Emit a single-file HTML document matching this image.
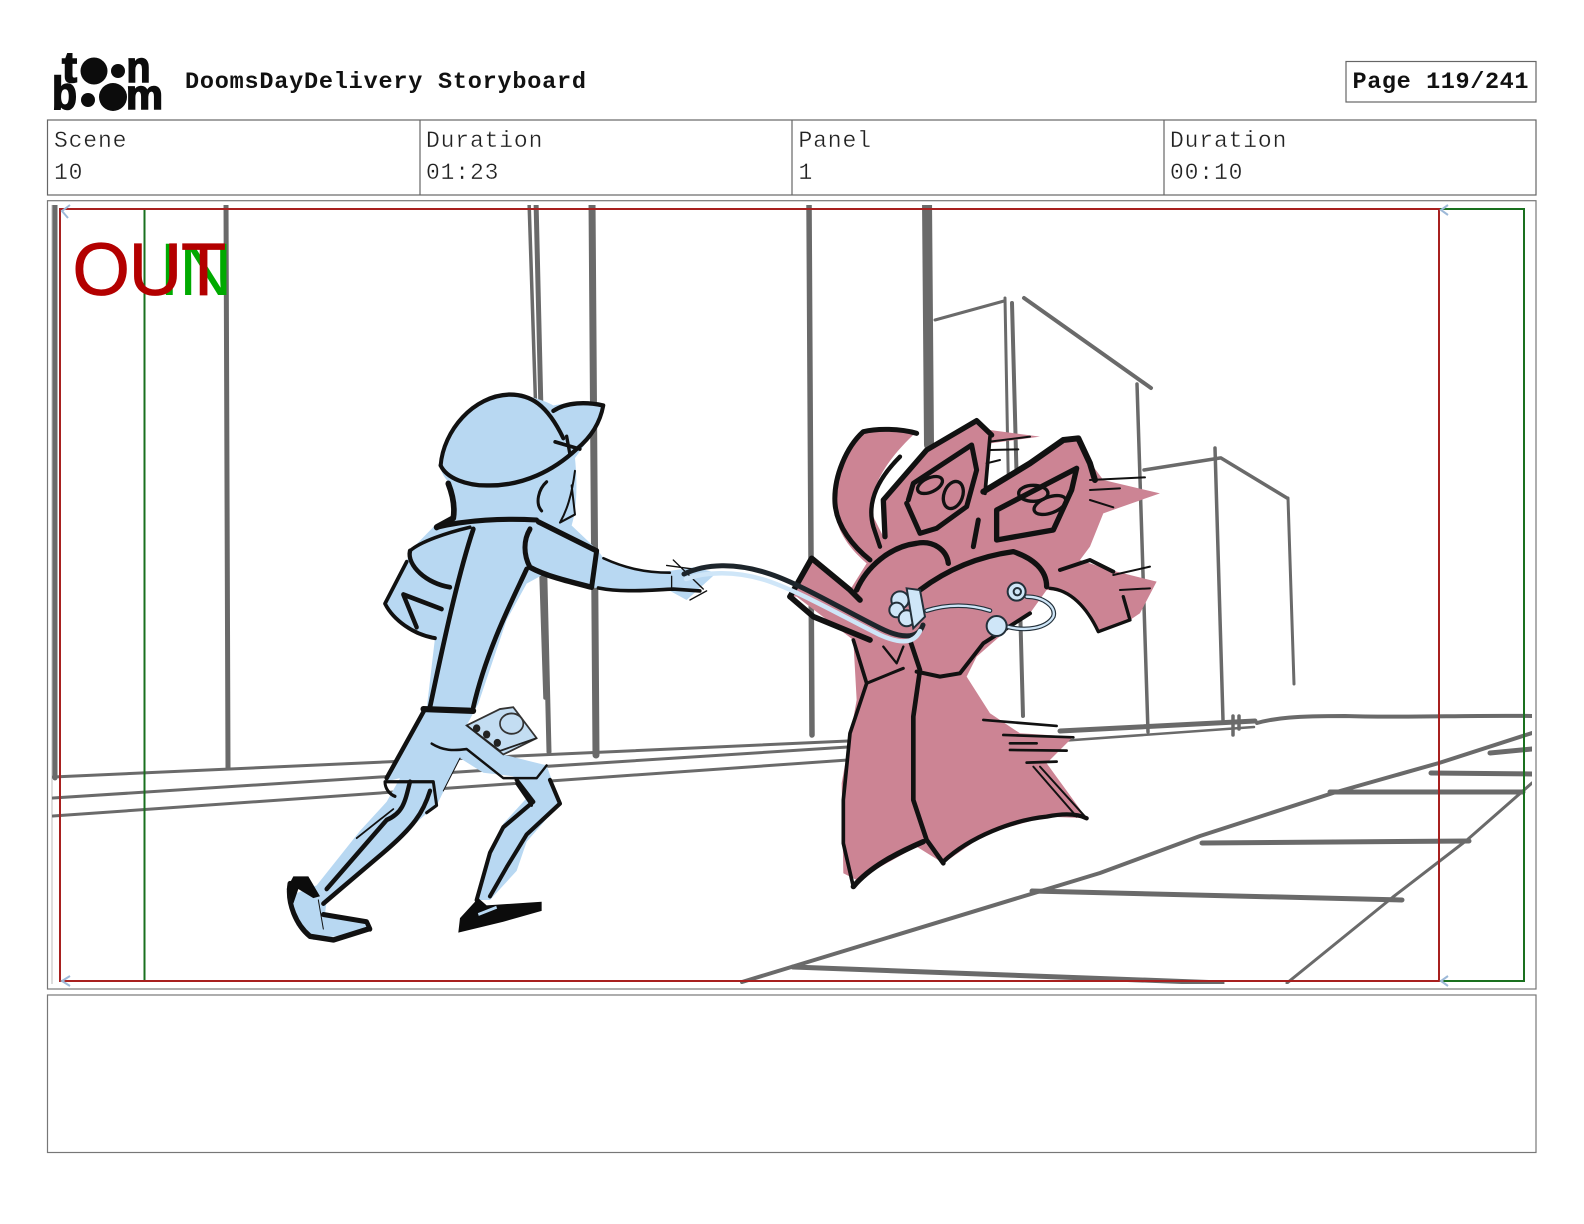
<!DOCTYPE html>
<html><head><meta charset="utf-8"><title>DoomsDayDelivery Storyboard</title>
<style>html,body{margin:0;padding:0;background:#fff}svg{display:block}
.m{font-family:"Liberation Mono",monospace;font-size:23px;fill:#222;stroke:#fff;stroke-width:.35px}
.b{font-family:"Liberation Mono",monospace;font-size:23.5px;font-weight:bold;fill:#111}
.k{fill:none;stroke:#111;stroke-linecap:round;stroke-linejoin:round}
.g{fill:none;stroke:#6a6a6a;stroke-linecap:round;stroke-linejoin:round}
</style></head><body>
<svg xmlns="http://www.w3.org/2000/svg" width="1584" height="1224" viewBox="0 0 1584 1224">
<defs><clipPath id="im"><rect x="52" y="205" width="1480" height="779"/></clipPath></defs>
<rect width="1584" height="1224" fill="#fff"/>
<!-- logo -->
<g fill="#0c0c0c" stroke="#0c0c0c" stroke-width="1.600" font-family="Liberation Sans,sans-serif" font-weight="bold">
<text x="62" y="82" font-size="44" textLength="15" lengthAdjust="spacingAndGlyphs">t</text>
<text x="126.500" y="82" font-size="44" textLength="24" lengthAdjust="spacingAndGlyphs">n</text>
<text x="52" y="109" font-size="46" textLength="25" lengthAdjust="spacingAndGlyphs">b</text>
<text x="126" y="109" font-size="42" textLength="37" lengthAdjust="spacingAndGlyphs">m</text>
</g>
<g fill="#0c0c0c"><circle cx="94" cy="71" r="13.500"/><circle cx="118" cy="71" r="7"/><circle cx="88" cy="100" r="7"/><circle cx="113" cy="97" r="14"/></g>
<text class="b" x="185" y="88" textLength="401">DoomsDayDelivery Storyboard</text>
<rect x="1346" y="61.5" width="190" height="40.5" fill="#fff" stroke="#666" stroke-width="1.2"/>
<text class="b" x="1352.5" y="88" textLength="176">Page 119/241</text>
<!-- info table -->
<rect x="47.5" y="120" width="1488.5" height="75" fill="#fff" stroke="#666" stroke-width="1.2"/>
<path d="M420 120V195M792 120V195M1164 120V195" stroke="#666" stroke-width="1.2"/>
<g letter-spacing=".85">
<text class="m" x="54" y="147">Scene</text><text class="m" x="54" y="179">10</text>
<text class="m" x="426" y="147">Duration</text><text class="m" x="426" y="179">01:23</text>
<text class="m" x="798.500" y="147">Panel</text><text class="m" x="798.500" y="179">1</text>
<text class="m" x="1170" y="147">Duration</text><text class="m" x="1170" y="179">00:10</text>
</g>
<!-- frame -->
<rect x="47.5" y="200.700" width="1488.5" height="788.300" fill="#fff" stroke="#777" stroke-width="1.2"/>
<path d="M52 205V984" stroke="#bbb" stroke-width="1"/>
<rect x="47.5" y="995" width="1488.5" height="157.500" fill="#fff" stroke="#777" stroke-width="1.2"/>
<!-- background -->
<g class="g" clip-path="url(#im)">
<path d="M55 200L55 778" stroke-width="5"/>
<path d="M226 200L228 768" stroke-width="5"/>
<path d="M529 200L545 698" stroke-width="3.500"/>
<path d="M536 200L549 752" stroke-width="5"/>
<path d="M592 200L596 755" stroke-width="7"/>
<path d="M809 200L812 735" stroke-width="5.500"/>
<path d="M927 200L929 445" stroke-width="10"/>
<path d="M935 320L1004 301M1005 298L1010 575" stroke-width="3"/>
<path d="M1012 303L1023 716" stroke-width="4"/>
<path d="M1024 298L1151 388" stroke-width="4"/>
<path d="M1137 384L1148 732" stroke-width="3.500"/>
<path d="M1144 470L1220 458M1221 458L1287 498" stroke-width="3.500"/>
<path d="M1215 448L1223 720" stroke-width="3.500"/>
<path d="M1288 498L1294 684" stroke-width="3"/>
<path d="M53 777L848 741" stroke-width="3"/>
<path d="M53 798L848 747" stroke-width="3"/>
<path d="M53 816L848 760" stroke-width="3"/>
<path d="M1060 731L1255 721" stroke-width="5"/>
<path d="M1060 741L1254 727" stroke-width="2.500"/>
<path d="M1233 716V735M1239 716V729" stroke-width="3.500"/>
<path d="M1257 723C1275 718 1295 716 1345 716C1400 718 1470 715 1532 716" stroke-width="4"/>
<path d="M742 982L1100 873L1200 836L1333 793L1439 763L1532 733" stroke-width="4"/>
<path d="M1490 753L1532 749" stroke-width="5"/>
<path d="M1431 773L1532 774" stroke-width="5"/>
<path d="M1330 792L1523 792" stroke-width="5"/>
<path d="M1202 843L1469 841" stroke-width="5"/>
<path d="M1032 891L1402 900" stroke-width="5"/>
<path d="M793 967L1222 983" stroke-width="5"/>
<path d="M1287 983L1393 897L1467 840L1532 783" stroke-width="3"/>
</g>
<!-- character: delivery boy -->
<g transform="translate(270,380) scale(.3333,.3636)">
<g fill="#b8d8f2">
<path d="M512 235C520 140 610 42 720 40C780 40 830 60 850 70C890 62 960 60 1000 68C995 120 950 170 915 215C920 260 925 340 905 400L985 470L1000 490C1050 515 1150 530 1200 525L1270 515L1340 530L1250 605L1200 580L1000 575L965 570L820 535L770 560L710 660L625 890L590 950L700 1030L830 1060L870 1165L770 1270L740 1350L660 1430L620 1430L660 1300L700 1220L770 1150L730 1090L640 1080L570 1040L500 1170L460 1200L340 1300L170 1430L165 1470L290 1490L290 1515L130 1540L80 1500L55 1420L140 1390L270 1240L350 1160L390 1095L345 1105L470 905L495 710L430 690C380 670 350 640 345 615L410 500L420 470L500 395L550 375L535 280C520 265 512 250 512 235Z"/>
</g>
<g class="k">
<path d="M512 235C520 140 610 42 720 40C780 40 830 65 880 160" stroke-width="12"/>
<path d="M512 235C530 270 590 292 660 290C760 290 850 250 920 190C960 160 990 120 1000 70C950 60 890 60 850 85" stroke-width="12"/>
<path d="M855 170L930 190M890 155L900 205" stroke-width="10"/>
<path d="M535 285C550 320 555 350 550 380L500 405" stroke-width="17"/>
<path d="M500 405C590 385 700 380 800 385" stroke-width="14"/>
<path d="M830 280C805 300 795 340 815 360" stroke-width="9"/>
<path d="M915 250C905 320 890 360 870 392L915 370L905 290" stroke-width="6"/>
<path d="M805 390L980 470L965 570C900 555 830 540 780 515C760 480 760 440 780 410" stroke-width="15"/>
<path d="M420 470C450 445 530 420 600 405" stroke-width="10"/>
<path d="M420 470C410 510 470 560 540 570" stroke-width="13"/>
<path d="M610 410C570 520 530 680 480 900" stroke-width="14"/>
<path d="M770 520C730 600 650 740 610 900" stroke-width="14"/>
<path d="M410 500L345 615C370 660 430 700 495 710" stroke-width="11"/>
<path d="M400 590L515 630M400 590L440 680" stroke-width="13"/>
<path d="M460 905L610 910" stroke-width="17"/>
<path d="M465 905L350 1095" stroke-width="13"/>
<path d="M345 1105L490 1105L500 1170L470 1190M345 1105C345 1125 360 1140 375 1145" stroke-width="9"/>
<path d="M485 1000C520 1020 550 1020 590 1015L700 1095L800 1095L830 1060" stroke-width="7"/>
<path d="M570 1040L520 1130" stroke-width="3"/>
<path d="M420 1105C405 1160 400 1190 350 1210L170 1400M480 1130C460 1190 430 1230 340 1300L160 1440" stroke-width="13"/>
<path d="M370 1180L260 1260" stroke-width="5"/>
<path d="M840 1100L870 1165L770 1250L710 1340L660 1420M740 1100L790 1160L700 1230L660 1300L620 1430" stroke-width="12"/>
<path d="M740 1110L785 1170" stroke-width="8"/>
<path d="M1000 490C1060 515 1120 530 1200 530" stroke-width="7"/>
<path d="M985 572C1060 585 1130 578 1210 575L1290 580" stroke-width="10"/>
<path d="M1190 510L1270 520M1210 495L1300 575M1205 540V575M1260 605L1310 580" stroke-width="4"/>
<path d="M60 1385C50 1440 80 1500 120 1530L190 1540L295 1510" stroke-width="15"/>
<path d="M160 1470L290 1490L300 1510" stroke-width="14"/>
<path d="M145 1430L160 1510" stroke-width="3"/>
</g>
<path d="M50 1400L70 1365L115 1365L150 1420L130 1425L85 1400L70 1440Z" fill="#0c0c0c"/>
<path d="M565 1520L570 1480L625 1425L650 1445L815 1435L815 1460L700 1490Z" fill="#0c0c0c"/>
<path d="M625 1470L680 1450" stroke="#b8d8f2" stroke-width="8"/>
<!-- box -->
<path d="M590 950L690 905L730 900L800 985L700 1030Z" fill="#c3ddf2" stroke="#333" stroke-width="5"/>
<path d="M590 950L690 1020L800 985" fill="none" stroke="#222" stroke-width="5"/>
<ellipse cx="725" cy="945" rx="35" ry="28" fill="none" stroke="#333" stroke-width="5"/>
<g fill="#222"><circle cx="620" cy="958" r="11"/><circle cx="650" cy="975" r="11"/><circle cx="682" cy="998" r="11"/></g>
</g>
<!-- character: pink creatures -->
<g transform="translate(770,400) scale(.3333)">
<path fill="#cc8494" d="M280 95L440 95C360 170 300 250 305 340L345 420L340 300L470 150L620 60L660 90L810 110L660 130L650 180L640 280L780 190L880 115L930 115L970 200L1000 240L1170 280L1000 340L960 440L930 480L1020 510L1160 545L1110 640L1080 660L990 695L960 640C930 600 880 570 830 570L780 640L700 700L620 770L590 830L660 940L750 1000L910 1010L830 1090L950 1255L830 1250L650 1300L520 1390L440 1340L260 1440L220 1420L215 1150L260 900L250 720L80 590L60 590L125 475L240 570L290 490C220 430 190 370 195 300C200 200 240 130 280 95Z"/>
<g class="k">
<path d="M440 100C390 85 320 85 280 95C230 140 190 230 195 310C200 380 250 440 300 480" stroke-width="15"/>
<path d="M390 170C320 240 290 310 310 380L330 440" stroke-width="13"/>
<path d="M345 410L340 300L470 150L620 62L665 105" stroke-width="16"/>
<path d="M660 110L645 280" stroke-width="11"/>
<path d="M415 300L430 250L605 135L620 210L590 320L500 385L450 400L410 310" stroke-width="15"/>
<ellipse cx="480" cy="255" rx="40" ry="21" transform="rotate(-25 480 255)" stroke-width="10"/>
<ellipse cx="550" cy="285" rx="28" ry="42" transform="rotate(20 550 285)" stroke-width="10"/>
<path d="M640 275L780 190L880 120L925 115L960 190L975 240" stroke-width="18"/>
<path d="M625 360L610 440" stroke-width="15"/>
<path d="M680 330L920 205L905 270L850 390L680 420Z" stroke-width="16"/>
<ellipse cx="790" cy="280" rx="44" ry="24" stroke-width="10"/>
<ellipse cx="840" cy="315" rx="50" ry="24" transform="rotate(-20 840 315)" stroke-width="10"/>
<path d="M660 125L780 110M660 150L745 148M650 190L690 180M960 240L1125 232M960 270L1050 265M960 300L1030 322M1030 525L1140 500M1050 570L1140 565" stroke-width="6"/>
<path d="M260 570C290 500 360 440 440 430C490 420 530 450 535 490" stroke-width="16"/>
<path d="M450 570C530 510 620 470 730 455C790 475 830 510 830 560" stroke-width="16"/>
<path d="M60 590L125 475L240 570L270 600" stroke-width="17"/>
<path d="M60 590L130 650L300 720" stroke-width="17"/>
<path d="M250 720L290 850L240 1000L220 1200L220 1330L250 1460" stroke-width="11"/>
<path d="M250 1460C300 1400 380 1360 460 1325" stroke-width="16"/>
<path d="M420 720L450 810L430 950L430 1200L470 1320L520 1390" stroke-width="14"/>
<path d="M520 1385C600 1310 730 1260 830 1250C880 1240 920 1240 950 1255" stroke-width="13"/>
<path d="M950 1255L810 1100M920 1250L790 1100" stroke-width="6"/>
<path d="M290 850L400 805" stroke-width="9"/>
<path d="M440 815L510 830L570 820L640 730L780 640" stroke-width="12"/>
<path d="M840 565C900 570 950 620 985 695L1080 660L1060 590" stroke-width="10"/>
<path d="M870 510L960 480L1030 515" stroke-width="12"/>
<path d="M640 960L860 978M700 1005L910 1012M720 1030L800 1030M720 1050L890 1052M770 1088L860 1085" stroke-width="8"/>
<path d="M340 740L380 790L400 740" stroke-width="7"/>
</g>
</g>
<!-- rope (over pink) -->
<g fill="none" stroke-linecap="round" stroke-linejoin="round">
<path d="M684 574C705 564 735 562 770 574C800 584 840 608 880 628C900 638 918 640 923 625" stroke="#1d252b" stroke-width="5"/>
<path d="M686 579C705 572 735 570 768 581C800 592 840 615 880 635C900 644 914 644 920 631" stroke="#cfe6f8" stroke-width="4.500"/>
</g>
<g transform="translate(770,400) scale(.3333)">
<g stroke="#23303a" stroke-width="6" fill="#cfe6f8">
<circle cx="390" cy="600" r="26"/><circle cx="380" cy="630" r="22"/><circle cx="410" cy="655" r="24"/>
<path d="M410 565L450 570L465 650L430 685Z"/>
</g>
<g fill="none" stroke-linecap="round" stroke-linejoin="round">
<path d="M470 632C530 612 600 612 660 632M770 590C820 590 860 620 850 650C830 685 770 695 710 680" stroke="#23303a" stroke-width="14"/>
<path d="M470 632C530 612 600 612 660 632M770 590C820 590 860 620 850 650C830 685 770 695 710 680" stroke="#cfe6f8" stroke-width="7"/>
</g>
<g fill="#cfe6f8" stroke="#23303a" stroke-width="6">
<circle cx="680" cy="678" r="30"/><circle cx="740" cy="575" r="27"/><circle cx="742" cy="575" r="11"/>
</g>
</g>
<!-- safe frames -->
<g fill="none" stroke-width="2">
<path d="M144.500 209V981M1439 209H1524V981H1439" stroke="#1a701f"/>
<rect x="60" y="209" width="1379" height="772" stroke="#a8201f"/>
</g>
<path d="M1448 205L1441 210L1448 215M1448 976L1441 981L1448 986M70 205L62 211L68 218M70 976L62 981L70 986" fill="none" stroke="#9db9d8" stroke-width="2"/>
<g font-family="Liberation Sans,sans-serif" font-size="74">
<text x="159 179" y="295" fill="#00aa00">IN</text>
<text x="72.400 128.700 181" y="295" fill="#b30000" stroke="#b30000" stroke-width=".8">OUT</text>
</g>
</svg>
</body></html>
